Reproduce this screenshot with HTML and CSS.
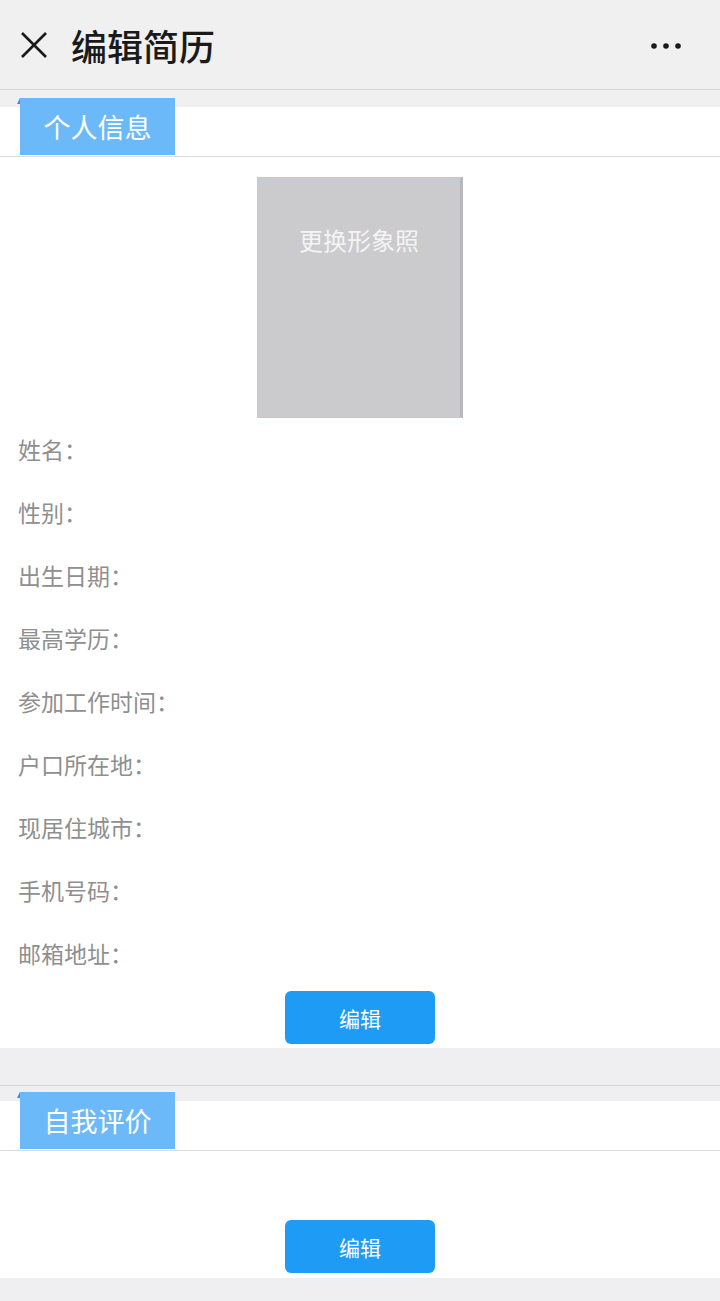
FILE: index.html
```html
<!DOCTYPE html>
<html lang="zh-CN">
<head>
    <meta charset="UTF-8">
    <meta name="viewport" content="width=device-width, initial-scale=1.0">
    <title>编辑简历</title>
    <link rel="stylesheet" href="styles.css">
</head>
<body>
    <div class="topbar">
        <svg class="close" width="26" height="26" viewBox="0 0 26 26">
            <path d="M1 1 L25 25 M25 1 L1 25" stroke="#1a1a1a" stroke-width="2.6" fill="none"/>
        </svg>
        <span class="title">编辑简历</span>
        <svg class="more" width="34" height="8" viewBox="0 0 34 8">
            <circle cx="4" cy="4" r="2.8" fill="#1a1a1a"/>
            <circle cx="16" cy="4" r="2.8" fill="#1a1a1a"/>
            <circle cx="28" cy="4" r="2.8" fill="#1a1a1a"/>
        </svg>
    </div>

    <!-- 个人信息 -->
    <div class="section">
        <div class="section-head first">
            <div class="tab">个人信息</div>
        </div>
        <div class="section-body">
            <div class="photo-wrap">
                <div class="photo">
                    <span class="photo-text">更换形象照</span>
                </div>
            </div>
            <div class="field">姓名：</div>
            <div class="field">性别：</div>
            <div class="field">出生日期：</div>
            <div class="field">最高学历：</div>
            <div class="field">参加工作时间：</div>
            <div class="field">户口所在地：</div>
            <div class="field">现居住城市：</div>
            <div class="field">手机号码：</div>
            <div class="field">邮箱地址：</div>
            <div class="actions">
                <button class="btn">编辑</button>
            </div>
        </div>
    </div>

    <div class="gap"></div>

    <!-- 自我评价 -->
    <div class="section">
        <div class="section-head second">
            <div class="tab">自我评价</div>
        </div>
        <div class="section-body eval">
            <div class="actions">
                <button class="btn">编辑</button>
            </div>
        </div>
    </div>
</body>
</html>
```

FILE: styles.css
```css
/* 页面基础 */
body {
    margin: 0;
    font-family: "Noto Sans CJK SC", "Noto Sans", sans-serif;
    background-color: #efeff1;
}

/* 顶部导航 */
.topbar {
    height: 89px;
    display: flex;
    align-items: center;
    padding: 0 36px 0 21px;
    background-color: #f0f0f0;
    border-bottom: 1px solid #d7d7d7;
}

.close {
    margin-right: 24px;
}

.title {
    flex: 1;
    font-size: 36px;
    font-weight: 500;
    color: #1a1a1a;
}

.more {
    margin-top: 2px;
}

/* 分区标题 */
.section-head {
    display: flex;
    padding-left: 20px;
    border-bottom: 1px solid #dcdcdc;
}

.section-head.first {
    padding-top: 8px;
    background: linear-gradient(#f0f0f0 17px, #ffffff 17px);
}

.section-head.second {
    padding-top: 6px;
    border-top: 1px solid #d6d6d6;
    background: linear-gradient(#efeff1 15px, #ffffff 15px);
}

.tab {
    position: relative;
    width: 155px;
    height: 58px;
    line-height: 57px;
    text-align: center;
    font-size: 27px;
    color: #ffffff;
    background: linear-gradient(#6bb9f8 57px, #ffffff 57px);
}

.tab::before {
    content: "";
    position: absolute;
    left: -3px;
    top: 0;
    border-bottom: 6px solid #3f8fd6;
    border-left: 3px solid transparent;
}

/* 分区内容 */
.section-body {
    background-color: #ffffff;
}

.photo-wrap {
    display: flex;
    justify-content: center;
    padding-top: 20px;
}

.photo {
    width: 202px;
    height: 239px;
    background-color: #cbcacd;
    border: 1px solid #a6d2ea;
    border-right: 3px solid #b8b8bc;
    display: flex;
    justify-content: center;
}

.photo-text {
    margin-top: 44px;
    height: 34px;
    font-size: 24px;
    color: #f4f4f4;
}

.field {
    height: 63px;
    line-height: 63px;
    padding-left: 18px;
    font-size: 23px;
    color: #8f8f8f;
}

.actions {
    display: flex;
    justify-content: center;
    padding: 6px 0 4px;
}

.eval .actions {
    padding: 69px 0 5px;
}

.btn {
    width: 150px;
    height: 53px;
    border: none;
    border-radius: 6px;
    background-color: #1e9bf5;
    color: #ffffff;
    font-family: inherit;
    font-size: 21px;
}

.gap {
    height: 37px;
    background-color: #efeff1;
}
```
